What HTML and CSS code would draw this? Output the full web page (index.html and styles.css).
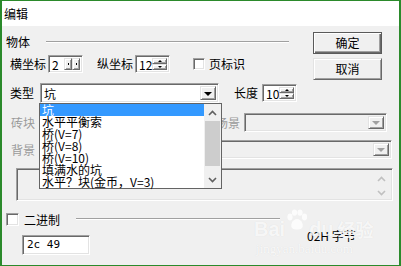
FILE: index.html
```html
<!DOCTYPE html>
<html lang="zh-CN">
<head>
  <meta charset="UTF-8">
  <title>编辑</title>
  <link rel="stylesheet" href="styles.css">
</head>
<body>
  <div class="window">
    <div class="titlebar">编辑</div>
    <div class="client">

      <div class="top">
        <div class="top-left">
          <div class="group-head">
            <span class="lbl">物体</span>
            <span class="rule"></span>
          </div>
          <div class="coords">
            <span class="lbl">横坐标</span>
            <div class="spin sunken gap-2">
              <span class="val">2</span>
              <span class="sbtn raised"><i class="dot"></i></span>
              <span class="sbtn raised"><i class="dot"></i></span>
            </div>
            <span class="lbl ml-14">纵坐标</span>
            <div class="spin sunken gap-2">
              <span class="val">12</span>
              <span class="arrows">
                <span class="abtn raised"><i class="tri-up"></i></span>
                <span class="abtn raised"><i class="tri-down"></i></span>
              </span>
            </div>
            <span class="check sunken ml-23"></span>
            <span class="lbl ml-4">页标识</span>
          </div>
        </div>
        <div class="buttons">
          <button class="btn default">确定</button>
          <button class="btn">取消</button>
        </div>
      </div>

      <div class="row type-row">
        <span class="lbl">类型</span>
        <div class="combo-wrap">
          <div class="combo sunken type-combo">
            <span class="combo-text">坑</span>
            <span class="drop raised"><i class="tri"></i></span>
          </div>
          <div class="listbox">
            <ul class="items">
              <li class="selected">坑</li>
              <li>水平平衡索</li>
              <li>桥(V=7)</li>
              <li>桥(V=8)</li>
              <li>桥(V=10)</li>
              <li>填满水的坑</li>
              <li>水平？块(金币，V=3)</li>
            </ul>
            <div class="vscroll">
              <span class="sarrow">
                <svg width="9" height="6" viewBox="0 0 9 6"><polyline points="1,5 4.5,1.5 8,5" fill="none" stroke="#606060" stroke-width="1.6"/></svg>
              </span>
              <span class="thumb"></span>
              <span class="sarrow bottom">
                <svg width="9" height="6" viewBox="0 0 9 6"><polyline points="1,1 4.5,4.5 8,1" fill="none" stroke="#606060" stroke-width="1.6"/></svg>
              </span>
            </div>
          </div>
        </div>
        <span class="lbl ml-15">长度</span>
        <div class="spin sunken ml-4">
          <span class="val">10</span>
          <span class="arrows">
            <span class="abtn raised"><i class="tri-up"></i></span>
            <span class="abtn raised"><i class="tri-down"></i></span>
          </span>
        </div>
      </div>

      <div class="row brick-row">
        <span class="lbl disabled">砖块</span>
        <div class="combo sunken off brick-combo">
          <span class="drop raised"><i class="tri"></i></span>
        </div>
        <span class="lbl disabled scene-lbl">场景</span>
        <div class="combo sunken off scene-combo">
          <span class="drop raised"><i class="tri"></i></span>
        </div>
      </div>

      <div class="row bg-row">
        <span class="lbl disabled">背景</span>
        <div class="combo sunken off bg-combo">
          <span class="drop raised"><i class="tri"></i></span>
        </div>
      </div>

      <div class="memo sunken off">
        <div class="memo-scroll">
          <svg width="9" height="6" viewBox="0 0 9 6"><polyline points="1,5 4.5,1.5 8,5" fill="none" stroke="#c0c0c0" stroke-width="1.6"/></svg>
          <svg width="9" height="6" viewBox="0 0 9 6"><polyline points="1,1 4.5,4.5 8,1" fill="none" stroke="#c0c0c0" stroke-width="1.6"/></svg>
        </div>
      </div>

      <div class="row binary-row">
        <span class="check sunken"></span>
        <span class="lbl ml-5">二进制</span>
        <span class="rule short"></span>
      </div>

      <div class="row last-row">
        <div class="hex sunken">2c 49</div>
        <span class="lbl bytes">02H 字节</span>
      </div>
    </div>

    <div class="watermark">
      <div class="wm-logo">
        <span>Bai</span>
        <svg width="24" height="22" viewBox="0 0 24 22">
          <ellipse cx="5" cy="8" rx="2.6" ry="3.4" fill="#fff"/>
          <ellipse cx="9.5" cy="3.6" rx="2.6" ry="3.2" fill="#fff"/>
          <ellipse cx="15" cy="3.6" rx="2.6" ry="3.2" fill="#fff"/>
          <ellipse cx="19.5" cy="8" rx="2.6" ry="3.4" fill="#fff"/>
          <path d="M12 10 C7 10 5 17 7 19 C9 21 15 21 17 19 C19 17 17 10 12 10 Z" fill="#fff"/>
        </svg>
        <span>du</span>
        <span class="wm-cn">经验</span>
      </div>
      <div class="wm-url">jingyan.baidu.com</div>
    </div>
  </div>
</body>
</html>
```

FILE: styles.css
```css
* {
  box-sizing: border-box;
}
body {
  margin: 0;
  background: #fff;
  font-family: "Noto Sans CJK SC", "Noto Sans", sans-serif;
  font-size: 12px;
  color: #000;
}
.window {
  width: 401px;
  height: 266px;
  border: 2px solid #2b8a2b;
  border-top-width: 1px;
  border-bottom-width: 1px;
  display: flex;
  flex-direction: column;
  position: relative;
  overflow: hidden;
}
.titlebar {
  height: 25px;
  background: #fff;
  padding: 7px 0 0 2px;
  line-height: 12px;
}
.client {
  flex: 1;
  background: #f0f0f0;
}

/* 3D borders */
.sunken {
  background: #fff;
  border: 1px solid;
  border-color: #a0a0a0 #fff #fff #a0a0a0;
  box-shadow: inset 1px 1px 0 #696969, inset -1px -1px 0 #e3e3e3;
}
.raised {
  background: #f0f0f0;
  border: 1px solid;
  border-color: #e3e3e3 #696969 #696969 #e3e3e3;
  box-shadow: inset 1px 1px 0 #fff, inset -1px -1px 0 #a0a0a0;
}
.off {
  background: #f0f0f0;
}

.lbl {
  display: block;
  height: 12px;
  line-height: 12px;
  white-space: nowrap;
}
.disabled {
  color: #9a9a9a;
}
.ml-4 { margin-left: 4px; }
.ml-5 { margin-left: 5px; }
.ml-14 { margin-left: 14px; }
.ml-15 { margin-left: 15px; }
.ml-23 { margin-left: 23px; }
.gap-2 { margin-left: 2px; }

.rule {
  flex: 1;
  height: 2px;
  border-top: 1px solid #a0a0a0;
  border-bottom: 1px solid #fff;
}

/* top block */
.top {
  display: flex;
  padding-top: 6px;
}
.top-left {
  width: 287px;
  padding-left: 4px;
}
.group-head {
  display: flex;
  align-items: center;
  margin-top: 4px;
  height: 12px;
}
.group-head .rule {
  margin-left: 16px;
}
.coords {
  display: flex;
  align-items: center;
  height: 18px;
  margin-top: 7px;
  padding-left: 4px;
}
.buttons {
  margin-left: auto;
  margin-right: 17px;
  width: 69px;
  display: flex;
  flex-direction: column;
  gap: 4px;
}
.btn {
  height: 22px;
  padding: 0;
  font: inherit;
  line-height: 12px;
  color: #000;
  background: #f0f0f0;
  border: 1px solid;
  border-color: #e3e3e3 #696969 #696969 #e3e3e3;
  box-shadow: inset 1px 1px 0 #fff, inset -1px -1px 0 #a0a0a0;
}
.btn.default {
  border: 1px solid #5a5a5a;
  box-shadow: inset 1px 1px 0 #fff, inset -1px -1px 0 #696969, inset -2px -2px 0 #a0a0a0;
}

/* spin boxes */
.spin {
  width: 35px;
  height: 18px;
  display: flex;
  padding: 2px 2px 2px 3px;
}
.spin .val {
  flex: 1;
  line-height: 14px;
}
.sbtn {
  width: 8px;
  display: flex;
  align-items: center;
  justify-content: center;
}
.dot {
  width: 1px;
  height: 2px;
  background: #000;
}
.arrows {
  width: 15px;
  display: flex;
  flex-direction: column;
}
.abtn {
  height: 7px;
  display: flex;
  align-items: center;
  justify-content: center;
}
.tri-up {
  border-left: 2px solid transparent;
  border-right: 2px solid transparent;
  border-bottom: 2px solid #000;
}
.tri-down {
  border-left: 2px solid transparent;
  border-right: 2px solid transparent;
  border-top: 2px solid #000;
}

.check {
  width: 12px;
  height: 12px;
}

/* rows */
.row {
  display: flex;
  align-items: center;
}
.type-row {
  height: 20px;
  margin-top: 3px;
  padding-left: 8px;
}
.combo-wrap {
  position: relative;
  margin-left: 6px;
}
.combo {
  display: flex;
  justify-content: flex-end;
  height: 20px;
  padding: 2px;
}
.combo-text {
  flex: 1;
  line-height: 16px;
  padding-left: 1px;
}
.drop {
  width: 16px;
  display: flex;
  align-items: center;
  justify-content: center;
}
.tri {
  border-left: 4px solid transparent;
  border-right: 4px solid transparent;
  border-top: 4px solid #000;
  margin-top: 1px;
}
.off .tri {
  border-top-color: #a0a0a0;
}
.type-combo {
  width: 179px;
}

/* open dropdown list */
.listbox {
  position: absolute;
  left: -1px;
  top: 20px;
  width: 183px;
  height: 86px;
  border: 1px solid #646464;
  background: #fff;
  display: flex;
  z-index: 2;
}
.items {
  list-style: none;
  margin: 0;
  padding: 0;
  flex: 1;
}
.items li {
  height: 12px;
  line-height: 12px;
  padding-left: 2px;
  white-space: nowrap;
}
.items li.selected {
  background: #3399ff;
  color: #fff;
}
.vscroll {
  width: 17px;
  background: #f0f0f0;
  display: flex;
  flex-direction: column;
}
.sarrow {
  height: 17px;
  display: flex;
  align-items: center;
  justify-content: center;
}
.sarrow.bottom {
  margin-top: auto;
}
.thumb {
  height: 45px;
  margin: 0 1px;
  background: #cdcdcd;
}

.brick-row {
  height: 19px;
  margin-top: 10px;
  padding-left: 9px;
}
.brick-combo {
  width: 160px;
  height: 19px;
  margin-left: 5px;
}
.scene-lbl {
  margin-left: 16px;
}
.scene-combo {
  width: 143px;
  height: 19px;
  margin-left: 4px;
}
.bg-row {
  height: 19px;
  margin-top: 8px;
  padding-left: 9px;
}
.bg-combo {
  width: 352px;
  height: 19px;
  margin-left: 5px;
}

.memo {
  width: 377px;
  height: 33px;
  margin: 9px 0 0 14px;
  padding: 2px;
  display: flex;
  justify-content: flex-end;
}
.memo-scroll {
  width: 17px;
  display: flex;
  flex-direction: column;
  align-items: center;
  justify-content: space-between;
  padding: 5px 0 2px;
}

.binary-row {
  height: 13px;
  margin-top: 12px;
  padding-left: 4px;
}
.binary-row .check {
  width: 13px;
  height: 13px;
}
.rule.short {
  flex: 0 0 204px;
  margin-left: 16px;
  margin-top: -2px;
}
.last-row {
  align-items: flex-start;
  margin-top: 4px;
}
.hex {
  width: 68px;
  height: 20px;
  margin: 5px 0 0 20px;
  padding: 2px 0 0 4px;
  line-height: 14px;
  font-family: "DejaVu Sans Mono", "Liberation Mono", monospace;
  font-size: 11px;
}
.bytes {
  margin-left: 217px;
}

/* watermark over the dialog */
.watermark {
  position: absolute;
  left: 252px;
  top: 208px;
  color: rgba(255, 255, 255, 0.8);
  text-shadow: 0 0 1px rgba(0, 0, 0, 0.1);
  pointer-events: none;
  z-index: 1;
}
.wm-logo {
  display: flex;
  align-items: flex-end;
  font-family: "Liberation Sans", sans-serif;
  font-weight: bold;
  font-size: 20px;
  line-height: 20px;
}
.wm-logo svg {
  opacity: 0.8;
  margin-bottom: 8px;
}
.wm-cn {
  font-family: "Noto Sans CJK SC", sans-serif;
  font-size: 18px;
  margin-left: 4px;
}
.wm-url {
  font-family: "Liberation Serif", serif;
  font-size: 13px;
  margin: 2px 0 0 2px;
}
```
